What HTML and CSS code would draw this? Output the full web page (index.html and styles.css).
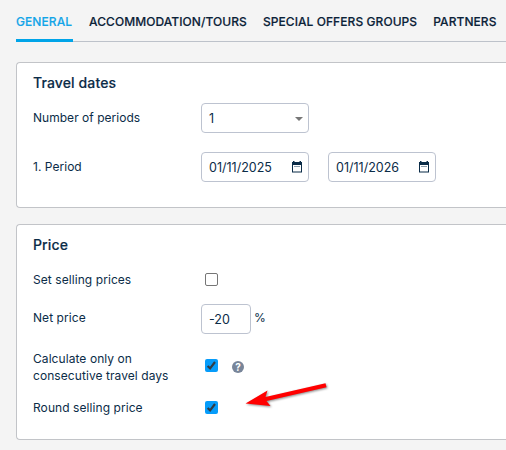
FILE: index.html
```html
<!DOCTYPE html>
<html lang="en">
<head>
    <meta charset="UTF-8">
    <meta name="viewport" content="width=device-width, initial-scale=1.0">
    <title>Special offer</title>
    <link rel="stylesheet" href="styles.css">
</head>
<body>

    <!-- Tabs -->
    <nav class="tabs">
        <a class="tab active">GENERAL</a>
        <a class="tab">ACCOMMODATION/TOURS</a>
        <a class="tab">SPECIAL OFFERS GROUPS</a>
        <a class="tab">PARTNERS</a>
    </nav>

    <!-- Travel dates -->
    <section class="card card-dates">
        <h2>Travel dates</h2>
        <div class="row row-periods">
            <div class="label">Number of periods</div>
            <div class="field select">
                <span>1</span>
                <svg class="caret" width="8" height="4" viewBox="0 0 8 4"><path d="M0 0h8L4 4z" fill="#777"/></svg>
            </div>
        </div>
        <div class="row row-period">
            <div class="label">1. Period</div>
            <div class="field date">
                <span>01/11/2025</span>
                <svg class="calendar" width="10" height="12" viewBox="0 0 10 12"><path d="M1 0h1.5v1h5V0H9v1h1v10.5H0V1h1zM1 4v6.5h8V4z" fill="#0b2c48" fill-rule="evenodd"/><path d="M2 5.5h6" stroke="#8b9cab" stroke-width="1"/></svg>
            </div>
            <div class="field date">
                <span>01/11/2026</span>
                <svg class="calendar" width="10" height="12" viewBox="0 0 10 12"><path d="M1 0h1.5v1h5V0H9v1h1v10.5H0V1h1zM1 4v6.5h8V4z" fill="#0b2c48" fill-rule="evenodd"/><path d="M2 5.5h6" stroke="#8b9cab" stroke-width="1"/></svg>
            </div>
        </div>
    </section>

    <!-- Price -->
    <section class="card card-price">
        <h2>Price</h2>
        <div class="row row-set">
            <div class="label">Set selling prices</div>
            <span class="checkbox"></span>
        </div>
        <div class="row row-net">
            <div class="label">Net price</div>
            <div class="field amount">-20</div>
            <span class="unit">%</span>
        </div>
        <div class="row row-calculate">
            <div class="label">Calculate only on consecutive travel days</div>
            <span class="checkbox checked">
                <svg width="13" height="13" viewBox="0 0 13 13"><path d="M2.6 7l2.5 2.4L10 3" fill="none" stroke="#303c46" stroke-width="2.2"/></svg>
            </span>
            <span class="help">?</span>
        </div>
        <div class="row row-round">
            <div class="label">Round selling price</div>
            <span class="checkbox checked">
                <svg width="13" height="13" viewBox="0 0 13 13"><path d="M2.6 7l2.5 2.4L10 3" fill="none" stroke="#303c46" stroke-width="2.2"/></svg>
            </span>
            <svg class="arrow" width="84" height="28" viewBox="0 0 84 28"><path d="M.5 22.5L22.5 9.5L20.5 16L80.5 2.3L81.5 6.3L21.5 20L25.5 25z" fill="#f00"/></svg>
        </div>
    </section>

</body>
</html>
```
FILE: styles.css
```css
* {
    margin: 0;
    padding: 0;
    box-sizing: border-box;
}

body {
    height: 450px;
    padding-left: 16px;
    overflow: hidden;
    background-color: #f4f4f4;
    color: #0b2c48;
    font-family: Inter, sans-serif;
    font-size: 12.5px;
    line-height: 17px;
}

.tabs {
    display: flex;
    gap: 16px;
    height: 42px;
    border-bottom: 1px solid #bdc2ca;
    color: #0b2238;
    white-space: nowrap;
    font-size: 12px;
    font-weight: 500;
    letter-spacing: 0.07px;
    -webkit-text-stroke: 0.15px;
}

.tab {
    flex-shrink: 0;
    height: 42px;
    padding-top: 13px;
}

.tab.active {
    width: 57px;
    color: #12a5e8;
    border-bottom: 3px solid #00a4e8;
}

.card {
    padding: 0 16px;
    background-color: #fff;
    border: 1px solid #c2c4c8;
    border-right: none;
    border-radius: 4px 0 0 4px;
}

.card-dates {
    height: 146px;
    margin-top: 20px;
}

.card-price {
    height: 216px;
    margin-top: 16px;
}

h2 {
    height: 40px;
    padding-top: 10px;
    font-size: 14px;
    font-weight: 500;
    line-height: 20px;
    letter-spacing: 0.12px;
    -webkit-text-stroke: 0.15px;
}

.row {
    display: flex;
    align-items: center;
    position: relative;
    height: 30px;
}

.label {
    width: 168px;
    padding-right: 26px;
    font-size: 12px;
    letter-spacing: 0.03px;
}

.card-price .label {
    letter-spacing: 0.07px;
}

.row-periods .label,
.row-period .label {
    padding-bottom: 2px;
}

.row-period {
    margin-top: 19px;
}

.field {
    display: flex;
    align-items: center;
    justify-content: space-between;
    width: 108px;
    height: 30px;
    padding: 0 6px 0 7px;
    border: 1px solid #bdc3d0;
    border-radius: 4px;
}

.date + .date {
    margin-left: 19px;
}

.select {
    padding-right: 5px;
}

.caret {
    margin-top: 2px;
}

.amount {
    width: 50px;
}

.unit {
    margin-left: 3px;
    padding-bottom: 3px;
    font-size: 12px;
}

.checkbox {
    width: 13px;
    height: 13px;
    margin-left: 4px;
    border: 1px solid #767676;
    border-radius: 2px;
}

.checkbox.checked {
    border: none;
    background-color: #069cfa;
}

.checkbox svg {
    display: block;
}

.row-set {
    height: 29px;
}

.row-net {
    margin-top: 10px;
}

.row-net .label {
    padding-bottom: 3px;
}

.row-calculate {
    align-items: flex-start;
    height: 34px;
    margin-top: 16px;
}

.row-calculate .checkbox {
    margin-top: 9px;
}

.help {
    width: 12px;
    height: 12px;
    margin: 11px 0 0 14px;
    border-radius: 50%;
    background-color: #788599;
    color: #fff;
    font-size: 10px;
    font-weight: 700;
    line-height: 12px;
    text-align: center;
}

.row-round {
    height: 17px;
    margin-top: 15px;
}

/* Arrow pointing at the rounding option */
.arrow {
    position: absolute;
    left: 212px;
    top: -18px;
    filter: drop-shadow(1px 1px 1px rgba(0, 0, 0, 0.45));
}
```
